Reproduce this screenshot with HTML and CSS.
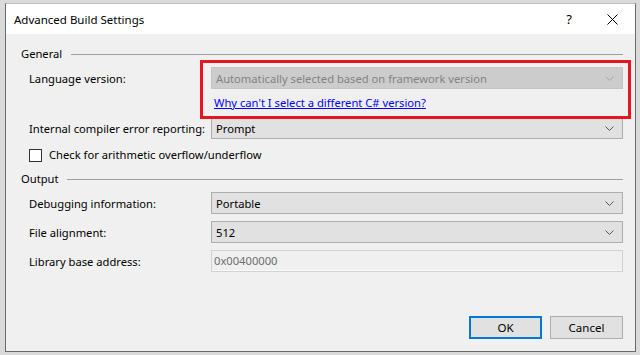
FILE: index.html
```html
<!DOCTYPE html>
<html lang="en">
<head>
  <meta charset="UTF-8">
  <meta name="viewport" content="width=device-width, initial-scale=1.0">
  <title>Advanced Build Settings</title>
  <link rel="stylesheet" href="styles.css">
</head>
<body>
  <div class="dialog">
    <div class="titlebar">
      <span class="title">Advanced Build Settings</span>
      <span class="help">?</span>
      <span class="close">
        <svg width="11" height="11" viewBox="0 0 11 11">
          <path d="M0.5 0.5 L10.5 10.5 M10.5 0.5 L0.5 10.5" stroke="#000" stroke-width="1" fill="none"/>
        </svg>
      </span>
    </div>

    <div class="content">
      <div class="group-head">
        <span>General</span>
        <div class="group-line"></div>
      </div>

      <div class="row">
        <label class="label">Language version:</label>
        <div class="field highlight">
          <div class="combo disabled">
            <span>Automatically selected based on framework version</span>
            <svg class="chevron" width="9" height="5" viewBox="0 0 9 5">
              <polyline points="0.5,0.5 4.5,4.5 8.5,0.5" fill="none" stroke="#a6a6a6" stroke-width="1"/>
            </svg>
          </div>
          <a class="link" href="#">Why can't I select a different C# version?</a>
        </div>
      </div>

      <div class="row">
        <label class="label">Internal compiler error reporting:</label>
        <div class="field">
          <div class="combo">
            <span>Prompt</span>
            <svg class="chevron" width="9" height="5" viewBox="0 0 9 5">
              <polyline points="0.5,0.5 4.5,4.5 8.5,0.5" fill="none" stroke="#555" stroke-width="1"/>
            </svg>
          </div>
        </div>
      </div>

      <div class="check-row">
        <span class="checkbox"></span>
        <span>Check for arithmetic overflow/underflow</span>
      </div>

      <div class="group-head output">
        <span>Output</span>
        <div class="group-line"></div>
      </div>

      <div class="row">
        <label class="label">Debugging information:</label>
        <div class="field">
          <div class="combo">
            <span>Portable</span>
            <svg class="chevron" width="9" height="5" viewBox="0 0 9 5">
              <polyline points="0.5,0.5 4.5,4.5 8.5,0.5" fill="none" stroke="#555" stroke-width="1"/>
            </svg>
          </div>
        </div>
      </div>

      <div class="row tight">
        <label class="label">File alignment:</label>
        <div class="field">
          <div class="combo">
            <span>512</span>
            <svg class="chevron" width="9" height="5" viewBox="0 0 9 5">
              <polyline points="0.5,0.5 4.5,4.5 8.5,0.5" fill="none" stroke="#555" stroke-width="1"/>
            </svg>
          </div>
        </div>
      </div>

      <div class="row tight">
        <label class="label">Library base address:</label>
        <div class="field">
          <div class="textbox">0x00400000</div>
        </div>
      </div>

      <div class="buttons">
        <button class="btn default">OK</button>
        <button class="btn">Cancel</button>
      </div>
    </div>
  </div>
</body>
</html>
```

FILE: styles.css
```css
body {
  margin: 0;
  padding: 3px 0 0 5px;
  background-color: #dadada;
  font-family: 'Noto Sans', 'Open Sans', sans-serif;
  font-size: 11.2px;
  color: #000;
  height: 355px;
  box-sizing: border-box;
  overflow: hidden;
  white-space: nowrap;
}
.dialog {
  width: 631px;
  height: 349px;
  box-sizing: border-box;
  border: 1px solid #6a6a6a;
  border-top-color: #bdbdbd;
  background-color: #f0f0f0;
  display: flex;
  flex-direction: column;
}
.titlebar {
  height: 30px;
  background-color: #fff;
  display: flex;
  align-items: center;
  padding-left: 8px;
}
.title {
  flex: 1;
  font-size: 11.5px;
}
.help {
  width: 16px;
  text-align: center;
  margin-right: 30px;
  font-size: 13px;
}
.close {
  width: 11px;
  height: 11px;
  margin-right: 17px;
  display: flex;
}
.content {
  flex: 1;
  display: flex;
  flex-direction: column;
  padding: 12px 12px 12px 15px;
}
.group-head {
  display: flex;
  align-items: center;
  gap: 9px;
  height: 16px;
  line-height: 16px;
}
.group-head.output {
  margin-top: 8px;
  gap: 8px;
}
.group-line {
  flex: 1;
  border-top: 1px solid #a0a0a0;
}
.row {
  display: grid;
  grid-template-columns: 182px 1fr;
  padding-left: 8px;
  margin-top: 5px;
  align-items: start;
}
.row + .row {
  margin-top: 6px;
}
.row.tight {
  margin-top: 7px;
}
.label {
  height: 22px;
  box-sizing: border-box;
  padding-top: 2px;
  line-height: 20px;
}
.field {
  display: flex;
  flex-direction: column;
}
.highlight {
  position: relative;
}
.highlight::after {
  content: "";
  position: absolute;
  left: -11px;
  right: -8px;
  top: -7px;
  bottom: -8px;
  border: 3px solid #e8141f;
  pointer-events: none;
}
.combo {
  height: 22px;
  box-sizing: border-box;
  border: 1px solid #adadad;
  background-color: #e1e1e1;
  display: flex;
  align-items: center;
  padding: 1px 8px 0 4px;
}
.combo span {
  flex: 1;
}
.combo.disabled {
  background-color: #cccccc;
  border-color: #c4c4c4;
  color: #838383;
}
.chevron {
  display: block;
}
.link {
  color: #0000ff;
  text-decoration: underline;
  margin-top: 6px;
  padding-left: 3px;
  line-height: 16px;
}
.check-row {
  display: flex;
  align-items: center;
  gap: 7px;
  padding-left: 8px;
  margin-top: 8px;
  line-height: 16px;
}
.checkbox {
  width: 13px;
  height: 13px;
  box-sizing: border-box;
  border: 1px solid #333;
  background-color: #fff;
}
.textbox {
  height: 22px;
  box-sizing: border-box;
  border: 1px solid #d2d2d2;
  box-shadow: inset 0 -1px 0 #fafafa;
  background-color: #f0f0f0;
  color: #6d6d6d;
  line-height: 20px;
  padding-left: 2px;
}
.buttons {
  margin-top: auto;
  display: flex;
  justify-content: flex-end;
  gap: 8px;
}
.btn {
  width: 73px;
  height: 23px;
  box-sizing: border-box;
  border: 1px solid #adadad;
  background-color: #e1e1e1;
  font-family: inherit;
  font-size: 11.5px;
  color: #000;
  padding: 0;
}
.btn.default {
  border: 2px solid #0078d7;
}
```
